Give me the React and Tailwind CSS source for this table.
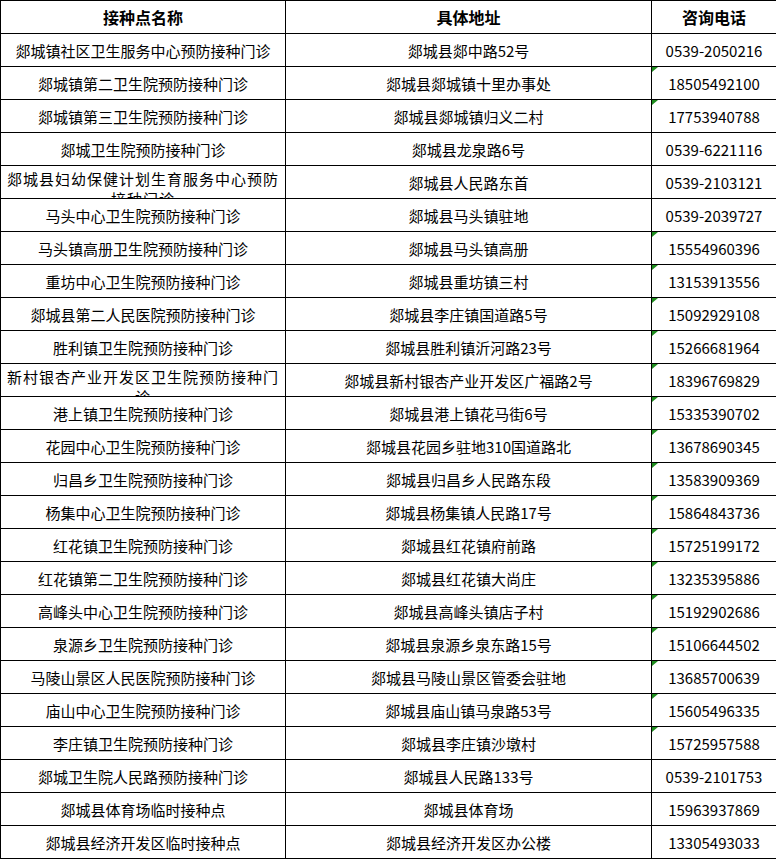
const rows = [
  ['郯城镇社区卫生服务中心预防接种门诊', '郯城县郯中路52号', '0539-2050216'],
  ['郯城镇第二卫生院预防接种门诊', '郯城县郯城镇十里办事处', '18505492100', true],
  ['郯城镇第三卫生院预防接种门诊', '郯城县郯城镇归义二村', '17753940788', true],
  ['郯城卫生院预防接种门诊', '郯城县龙泉路6号', '0539-6221116'],
  ['郯城县妇幼保健计划生育服务中心预防接种门诊', '郯城县人民路东首', '0539-2103121'],
  ['马头中心卫生院预防接种门诊', '郯城县马头镇驻地', '0539-2039727'],
  ['马头镇高册卫生院预防接种门诊', '郯城县马头镇高册', '15554960396', true],
  ['重坊中心卫生院预防接种门诊', '郯城县重坊镇三村', '13153913556', true],
  ['郯城县第二人民医院预防接种门诊', '郯城县李庄镇国道路5号', '15092929108', true],
  ['胜利镇卫生院预防接种门诊', '郯城县胜利镇沂河路23号', '15266681964', true],
  ['新村银杏产业开发区卫生院预防接种门诊', '郯城县新村银杏产业开发区广福路2号', '18396769829', true],
  ['港上镇卫生院预防接种门诊', '郯城县港上镇花马街6号', '15335390702', true],
  ['花园中心卫生院预防接种门诊', '郯城县花园乡驻地310国道路北', '13678690345', true],
  ['归昌乡卫生院预防接种门诊', '郯城县归昌乡人民路东段', '13583909369', true],
  ['杨集中心卫生院预防接种门诊', '郯城县杨集镇人民路17号', '15864843736', true],
  ['红花镇卫生院预防接种门诊', '郯城县红花镇府前路', '15725199172', true],
  ['红花镇第二卫生院预防接种门诊', '郯城县红花镇大尚庄', '13235395886', true],
  ['高峰头中心卫生院预防接种门诊', '郯城县高峰头镇店子村', '15192902686', true],
  ['泉源乡卫生院预防接种门诊', '郯城县泉源乡泉东路15号', '15106644502', true],
  ['马陵山景区人民医院预防接种门诊', '郯城县马陵山景区管委会驻地', '13685700639', true],
  ['庙山中心卫生院预防接种门诊', '郯城县庙山镇马泉路53号', '15605496335', true],
  ['李庄镇卫生院预防接种门诊', '郯城县李庄镇沙墩村', '15725957588', true],
  ['郯城卫生院人民路预防接种门诊', '郯城县人民路133号', '0539-2101753'],
  ['郯城县体育场临时接种点', '郯城县体育场', '15963937869'],
  ['郯城县经济开发区临时接种点', '郯城县经济开发区办公楼', '13305493033'],
]

// names too long for one line in the sheet get wrapped and clipped
const wrapped = {
  '郯城县妇幼保健计划生育服务中心预防接种门诊': ['郯城县妇幼保健计划生育服务中心预防', '接种门诊'],
  '新村银杏产业开发区卫生院预防接种门诊': ['新村银杏产业开发区卫生院预防接种门', '诊'],
}

function Cell({ children }) {
  return (
    <td className="border border-black p-0 h-[33px] align-middle">
      <div className="h-[32px] flex items-center justify-center pt-[3px] whitespace-nowrap overflow-hidden">
        {children}
      </div>
    </td>
  )
}

export default function App() {
  return (
    <div
      className="w-[776px] h-[859px] bg-white text-black text-[15px] overflow-hidden"
      style={{ fontFamily: '"Noto Sans CJK SC", "Noto Sans", sans-serif' }}
    >
      <table className="table-fixed border-collapse w-[776px]">
        <colgroup>
          <col className="w-[285px]" />
          <col className="w-[366px]" />
          <col className="w-[125px]" />
        </colgroup>
        <thead>
          <tr>
            {['接种点名称', '具体地址', '咨询电话'].map((h) => (
              <th key={h} className="border border-black p-0 h-[33px] font-bold text-[16px]">
                <div className="h-[32px] flex items-center justify-center">{h}</div>
              </th>
            ))}
          </tr>
        </thead>
        <tbody>
          {rows.map(([name, addr, phone, flag]) => (
            <tr key={name}>
              {wrapped[name] ? (
                <td className="border border-black p-0 h-[33px] align-top">
                  <div className="h-[32px] overflow-hidden text-center leading-[20px] pt-[3px] tracking-[1px] whitespace-nowrap">
                    <div>{wrapped[name][0]}</div>
                    <div>{wrapped[name][1]}</div>
                  </div>
                </td>
              ) : (
                <Cell>{name}</Cell>
              )}
              <Cell>{addr}</Cell>
              <td className="border border-black p-0 h-[33px] relative">
                {flag && (
                  <span className="absolute left-0 top-0 w-0 h-0 border-t-[5px] border-t-[#1e8c1e] border-r-[6px] border-r-transparent" />
                )}
                <div className="h-[32px] flex items-center justify-center pt-[3px] whitespace-nowrap">
                  {phone}
                </div>
              </td>
            </tr>
          ))}
        </tbody>
      </table>
    </div>
  )
}
